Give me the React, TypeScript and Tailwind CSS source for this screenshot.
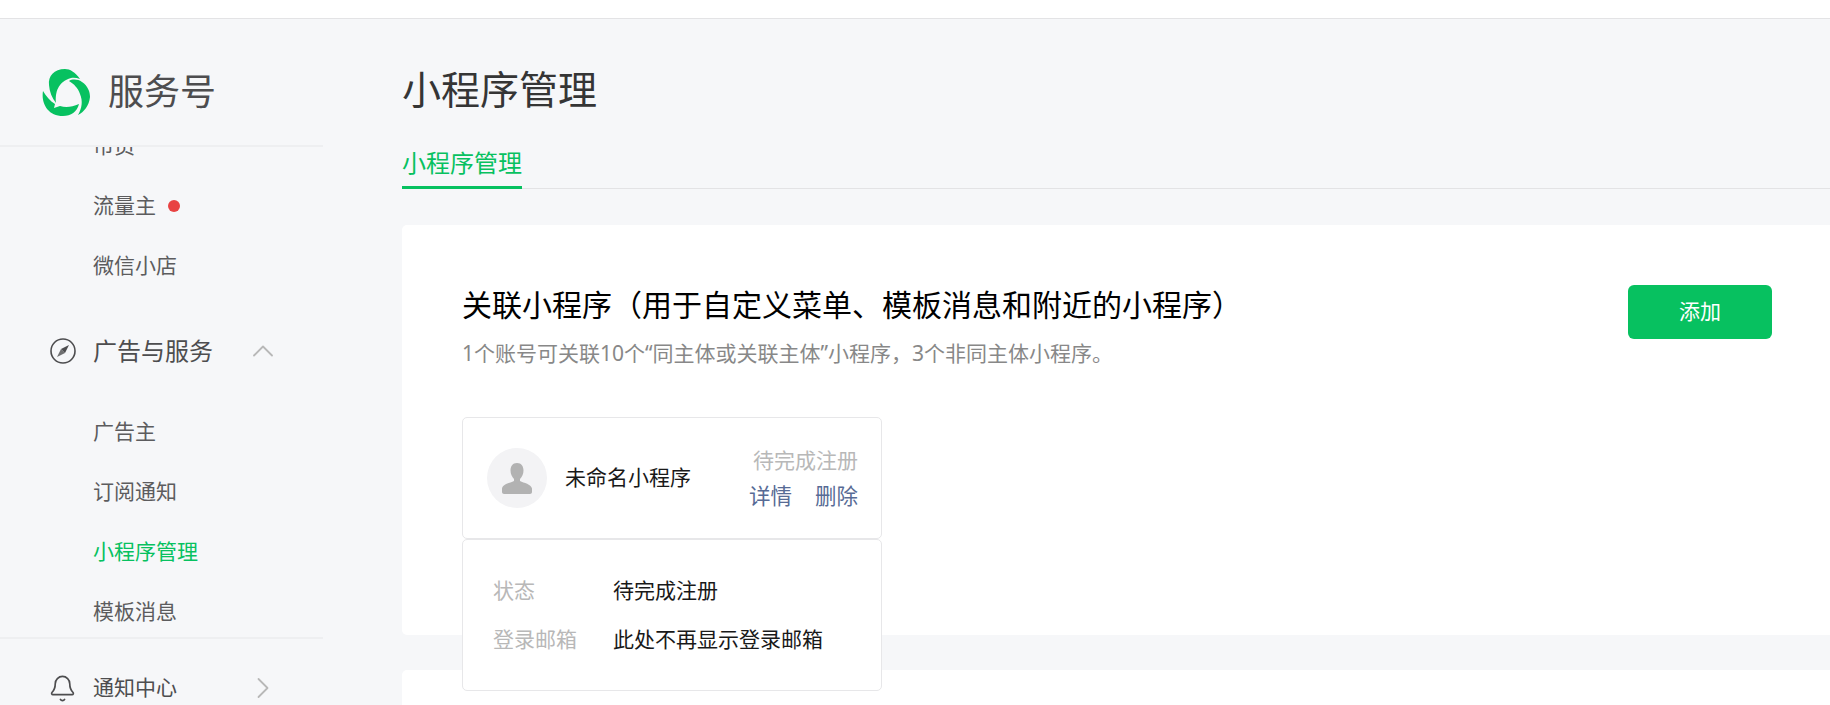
import { Bell, ChevronRight, ChevronUp } from "lucide-react";

const font = "font-['Noto_Sans','Noto_Sans_CJK_SC',sans-serif]";

function Logo() {
  return (
    <svg viewBox="0 0 48 48" className="w-12 h-12 shrink-0">
      <path
        fill="#07c160"
        d="M38 11C33 4 28 1 23 1C12 1 6 8 7 17C7.5 24 10 30 14 35C13 24 16 14 29 10C32 9.5 35 10 38 11Z"
      />
      <path
        fill="#07c160"
        d="M27 13C30 11 36 11 40 14C46 18 48 24 48 29C47 38 42 44 36 47C40 40 41 33 38 26C36 20 32 16 27 13Z"
      />
      <path
        fill="#07c160"
        d="M1 23C-1 34 5 48 21 48C29 48 35 44 37 36C30 39 24 40 18 38L12 40L13 36C8 33 4 28 1 23Z"
      />
    </svg>
  );
}

function Compass() {
  return (
    <svg viewBox="0 0 26 26" className="w-[26px] h-[26px]" fill="none">
      <circle cx="13" cy="13" r="12" stroke="#4d4d4f" strokeWidth="1.6" />
      <path fill="#4d4d4f" d="M19 7L11 11L15 15Z" />
      <path fill="#4d4d4f" d="M7 19L11 11L15 15Z" opacity="0.8" />
    </svg>
  );
}

function SubItem({ label, active, dot }: { label: string; active?: boolean; dot?: boolean }) {
  return (
    <div
      className={`h-[60px] pl-[93px] flex items-center text-[21px] ${active ? "text-[#07c160]" : "text-[#5c5c5e]"}`}
    >
      {label}
      {dot && <span className="ml-3 w-3 h-3 rounded-full bg-[#e84343]" />}
    </div>
  );
}

function Sidebar() {
  return (
    <aside className="w-[323px] shrink-0 flex flex-col bg-[#f6f7f9]">
      <div className="h-[128px] shrink-0 flex items-center gap-[18px] pl-[42px] pt-[20px] border-b-2 border-[#eeeff1] text-[36px] text-[#4d4d4f] z-10 bg-[#f6f7f9]">
        <Logo />
        服务号
      </div>
      <nav className="flex-1 overflow-hidden">
        <div className="-mt-[31px]">
          <SubItem label="市员" />
          <SubItem label="流量主" dot />
          <SubItem label="微信小店" />
          <div className="h-[106px] pt-[4px] flex items-center pl-[50px] text-[24px] text-[#4d4d4f]">
            <Compass />
            <span className="ml-[17px] flex-1">广告与服务</span>
            <ChevronUp className="w-9 h-9 mr-[42px] text-[#b8b8b8]" strokeWidth={1.2} />
          </div>
          <SubItem label="广告主" />
          <SubItem label="订阅通知" />
          <SubItem label="小程序管理" active />
          <SubItem label="模板消息" />
        </div>
      </nav>
      <div className="h-[68px] shrink-0 border-t-2 border-[#eeeff1] pt-[31px] pl-[48px] text-[21px] text-[#4d4d4f] overflow-hidden">
        <div className="h-9 flex items-center">
          <Bell className="w-[29px] h-[29px]" strokeWidth={1.4} />
          <span className="ml-[16px] flex-1">通知中心</span>
          <ChevronRight className="w-9 h-9 mr-[42px] text-[#b8b8b8]" strokeWidth={1.2} />
        </div>
      </div>
    </aside>
  );
}

function Person() {
  return (
    <svg viewBox="0 0 32 32" className="w-8 h-8">
      <path
        fill="#b2b2b2"
        d="M16 1C11.5 1 9.5 4.5 9.5 8.5C9.5 12 11 15 13 17V19C9 21 2 22 1 26.5V30C1 31 2 32 3 32H29C30 32 31 31 31 30V26.5C30 22 23 21 19 19V17C21 15 22.5 12 22.5 8.5C22.5 4.5 20.5 1 16 1Z"
      />
    </svg>
  );
}

function MiniProgramRow() {
  return (
    <div className="relative w-[420px] mt-[46px]">
      <div className="h-[122px] rounded-[5px] border border-[#e7e7e9] flex items-center pl-6 pr-[23px] bg-white">
        <div className="w-[60px] h-[60px] rounded-full bg-[#f3f3f5] flex items-center justify-center">
          <Person />
        </div>
        <span className="ml-[18px] flex-1 text-[21px] text-[#191919]">未命名小程序</span>
        <div className="flex flex-col items-end text-[21px] leading-[36px]">
          <span className="text-[#b8b8b8]">待完成注册</span>
          <div className="flex gap-[23px] text-[21.5px] text-[#576b95]">
            <span>详情</span>
            <span>删除</span>
          </div>
        </div>
      </div>
      <div className="absolute left-0 top-[122px] w-[420px] h-[152px] rounded-[5px] border border-[#e7e7e9] bg-white px-[30px] pt-[32px] grid grid-cols-[120px_1fr] content-start gap-y-[13px] text-[21px] leading-[36px]">
        <span className="text-[#b8b8b8]">状态</span>
        <span className="text-[#191919]">待完成注册</span>
        <span className="text-[#b8b8b8]">登录邮箱</span>
        <span className="text-[#191919]">此处不再显示登录邮箱</span>
      </div>
    </div>
  );
}

export default function App() {
  return (
    <div className={`h-[705px] w-[1830px] overflow-hidden bg-[#f6f7f9] flex flex-col ${font}`}>
      <div className="h-[19px] shrink-0 bg-white border-b border-[#e3e3e5]" />
      <div className="flex-1 flex min-h-0">
        <Sidebar />
        <main className="flex-1 min-w-0 pl-[79px]">
          <h1 className="mt-[42px] text-[39px] leading-[55px] text-[#353535]">小程序管理</h1>
          <div className="mt-[27px] h-[46px] border-b border-[#e3e3e5]">
            <div className="inline-block h-[46px] border-b-[3px] border-[#07c160] text-[24px] leading-[40px] text-[#07c160]">
              小程序管理
            </div>
          </div>
          <section className="mt-[36px] h-[410px] rounded-l-[5px] bg-white pl-[60px] pt-[57px] pr-[58px]">
            <div className="flex items-start justify-between">
              <div>
                <h2 className="text-[30px] leading-[46px] text-[#000]">
                  关联小程序（用于自定义菜单、模板消息和附近的小程序）
                </h2>
                <p className="mt-[7px] text-[21px] leading-[36px] text-[#888]">
                  1个账号可关联10个“同主体或关联主体”小程序，3个非同主体小程序。
                </p>
              </div>
              <button className="mt-[3px] w-[144px] h-[54px] rounded-[6px] bg-[#07c160] text-white text-[21px]">
                添加
              </button>
            </div>
            <MiniProgramRow />
          </section>
          <section className="mt-[35px] h-[200px] rounded-l-[5px] bg-white" />
        </main>
      </div>
    </div>
  );
}
